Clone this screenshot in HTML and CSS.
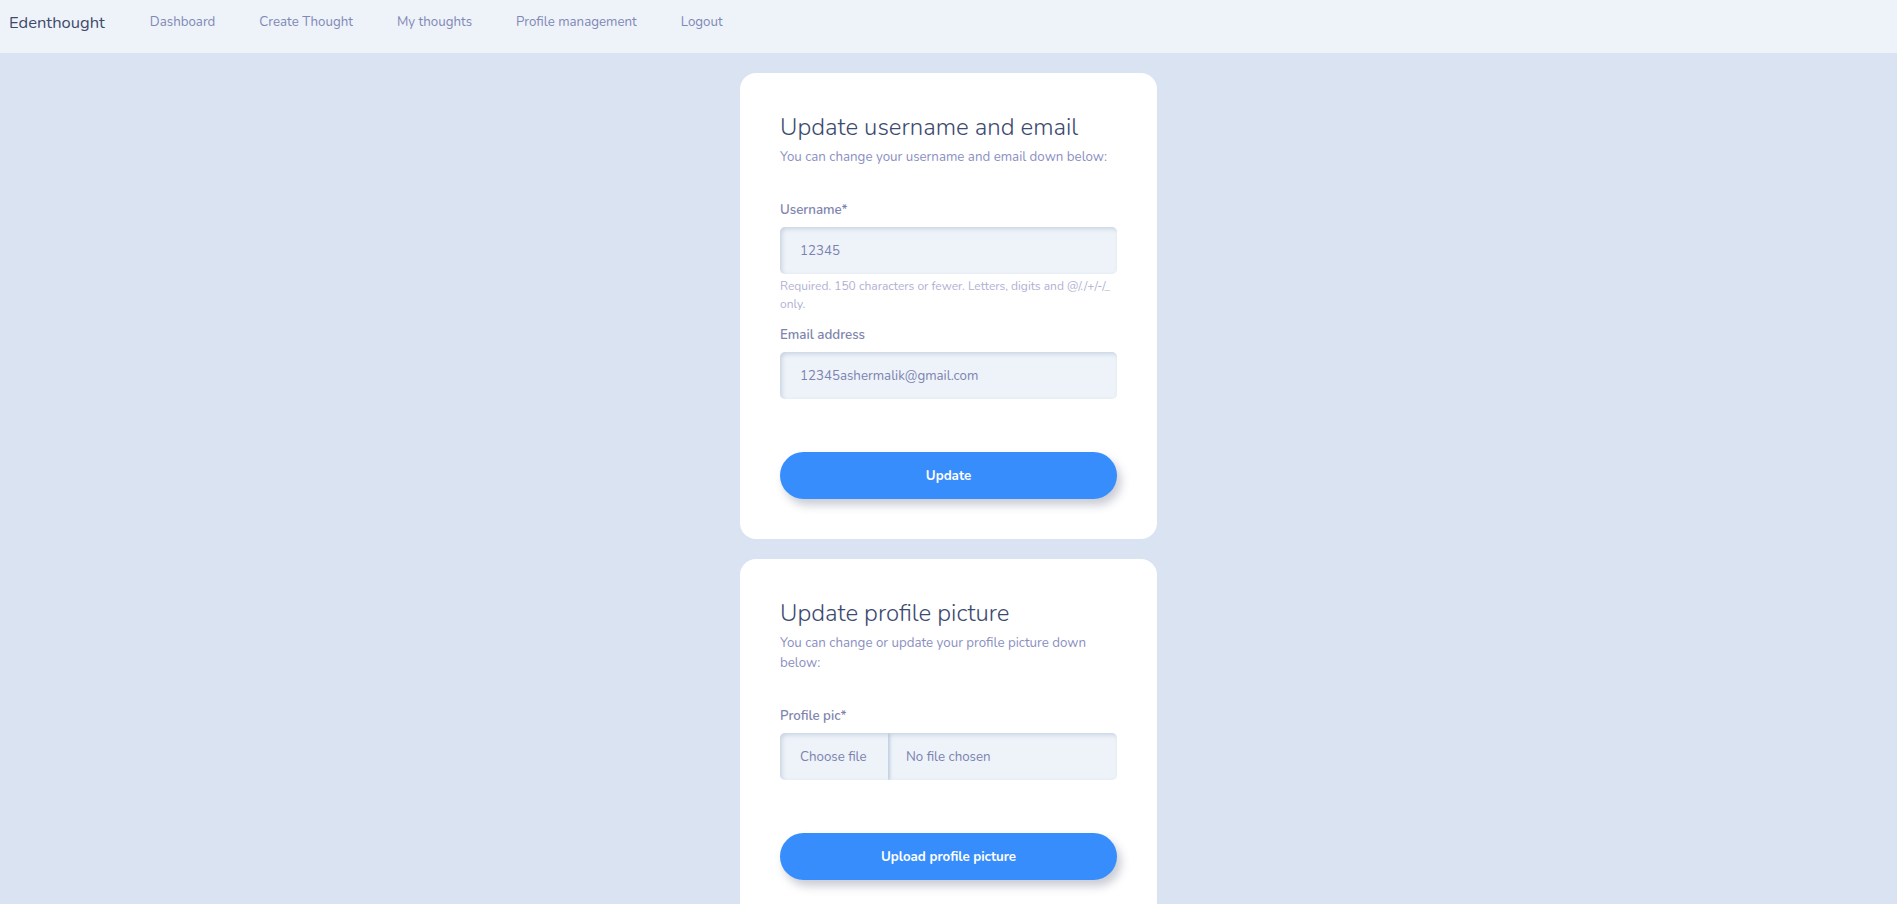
FILE: index.html
```html
<!DOCTYPE html>
<html lang="en">
<head>
<meta charset="utf-8">
<title>Profile management</title>
<link rel="stylesheet" href="styles.css">
</head>
<body>
<nav class="navbar">
  <a class="brand" href="#">Edenthought</a>
  <ul class="nav-links">
    <li><a href="#">Dashboard</a></li>
    <li><a href="#">Create Thought</a></li>
    <li><a href="#">My thoughts</a></li>
    <li><a href="#">Profile management</a></li>
    <li><a href="#">Logout</a></li>
  </ul>
</nav>
<main class="content">
  <section class="card">
    <h2 class="card-title">Update username and email</h2>
    <p class="card-sub">You can change your username and email down below:</p>
    <form class="form">
      <label class="field-label">Username*</label>
      <div class="input">12345</div>
      <p class="help">Required. 150 characters or fewer. Letters, digits and @/./+/-/_ only.</p>
      <label class="field-label second">Email address</label>
      <div class="input">12345ashermalik@gmail.com</div>
      <button type="button" class="btn">Update</button>
    </form>
  </section>
  <section class="card">
    <h2 class="card-title">Update profile picture</h2>
    <p class="card-sub">You can change or update your profile picture down below:</p>
    <form class="form">
      <label class="field-label">Profile pic*</label>
      <div class="input file">
        <span class="file-btn">Choose file</span>
        <span class="file-name">No file chosen</span>
      </div>
      <button type="button" class="btn">Upload profile picture</button>
    </form>
  </section>
</main>
</body>
</html>
```
FILE: styles.css
```css
* { box-sizing: border-box; }
html, body { margin: 0; padding: 0; }
body {
  background: #d9e3f1;
  font-family: "Nunito", Lato, "Noto Sans", sans-serif;
  color: #8a8fbb;
  min-height: 904px;
}
.navbar {
  height: 53px;
  background: #eef3f9;
  display: flex;
  align-items: center;
  padding: 0 0 9px 9px;
}
.brand {
  font-size: 16.5px;
  color: #3e4a6b;
  text-decoration: none;
  margin-right: 23px;
}
.nav-links {
  display: flex;
  list-style: none;
  margin: 0;
  padding: 0;
}
.nav-links a {
  display: block;
  padding: 0 22px;
  font-size: 13.3px;
  color: #8088b6;
  text-decoration: none;
}
.content {
  display: flex;
  flex-direction: column;
  align-items: center;
  gap: 20px;
  padding-top: 20px;
}
.card {
  width: 417px;
  background: #ffffff;
  border-radius: 16px;
  padding: 40px 40px 40px;
}
.card-title {
  margin: 0;
  font-size: 24px;
  line-height: 29px;
  font-weight: 300;
  color: #3d4a70;
}
.card-sub {
  margin: 5px 0 0;
  font-size: 13.3px;
  line-height: 20px;
  color: #8a8fbf;
}
.form {
  display: flex;
  flex-direction: column;
  margin-top: 33px;
}
.field-label {
  font-size: 13.3px;
  line-height: 20px;
  font-weight: 600;
  color: #7e84ad;
}
.field-label.second { margin-top: 12px; }
.input {
  margin-top: 7px;
  height: 47px;
  background: #eef3f9;
  border-radius: 5px;
  box-shadow: inset 2px 2px 4px rgba(170, 185, 210, 0.55);
  font-size: 13.3px;
  color: #7b82b0;
  display: flex;
  align-items: center;
  padding: 0 20px;
}
.help {
  margin: 3px 0 0;
  font-size: 12px;
  line-height: 18px;
  color: #b1b0d3;
}
.input.file { padding: 0; overflow: hidden; }
.file-btn {
  width: 108px;
  height: 100%;
  display: flex;
  align-items: center;
  padding-left: 20px;
  box-shadow: 2px 0 3px rgba(170, 185, 210, 0.7);
}
.file-name { padding-left: 18px; }
.btn {
  margin-top: 53px;
  height: 47px;
  border: none;
  border-radius: 24px;
  background: #388dfc;
  color: #ffffff;
  font-family: inherit;
  font-size: 13.3px;
  font-weight: 700;
  box-shadow: 4px 6px 10px rgba(60, 70, 100, 0.28);
  cursor: pointer;
}
```
